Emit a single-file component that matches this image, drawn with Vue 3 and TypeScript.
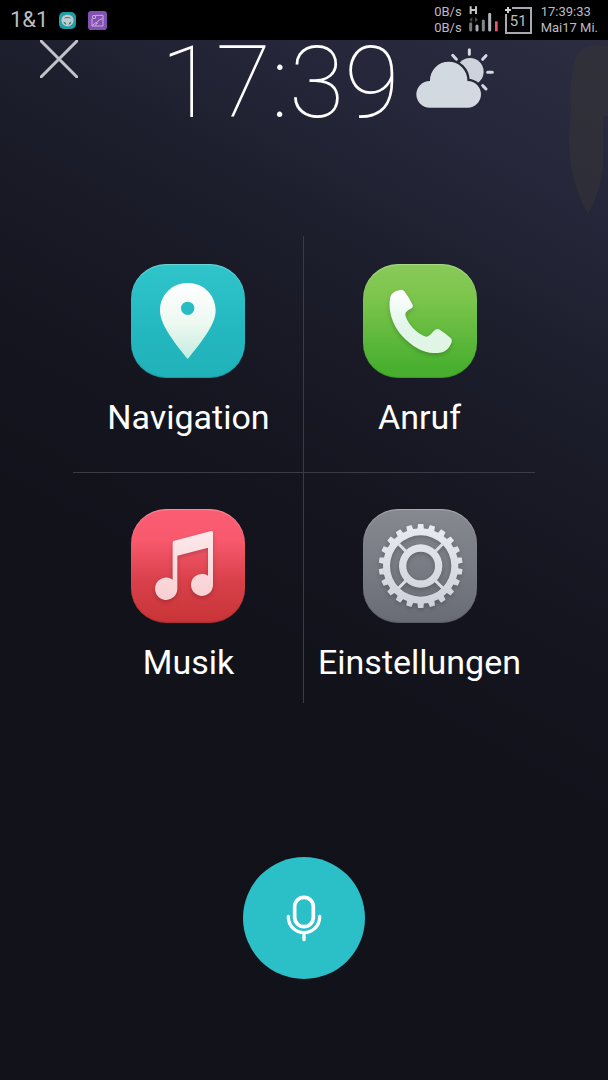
<script setup lang="ts">
interface AppEntry {
  id: 'navigation' | 'call' | 'music' | 'settings'
  label: string
}

const apps: AppEntry[] = [
  { id: 'navigation', label: 'Navigation' },
  { id: 'call', label: 'Anruf' },
  { id: 'music', label: 'Musik' },
  { id: 'settings', label: 'Einstellungen' },
]

const TEETH = 22

function gearOutline(cx: number, cy: number, outer: number, inner: number): string {
  const step = (Math.PI * 2) / TEETH
  const points: string[] = []
  const add = (r: number, a: number) =>
    points.push(`${(cx + r * Math.sin(a)).toFixed(1)} ${(cy - r * Math.cos(a)).toFixed(1)}`)
  for (let i = 0; i < TEETH; i++) {
    const a = i * step
    add(inner, a - step * 0.3)
    add(outer, a - step * 0.22)
    add(outer, a + step * 0.22)
    add(inner, a + step * 0.3)
  }
  return `M${points.join('L')}Z`
}

function disc(cx: number, cy: number, r: number): string {
  return `M${cx - r} ${cy}a${r} ${r} 0 1 0 ${r * 2} 0a${r} ${r} 0 1 0 ${-r * 2} 0Z`
}

const gearRim = gearOutline(173, 171, 126, 113) + disc(173, 171, 92)
const gearHub = disc(173, 171, 65) + disc(173, 171, 43)
</script>

<template>
  <div class="screen">
    <div class="status">
      <div class="status-left">
        <span class="carrier">1&amp;1</span>
        <svg class="note-wheel" viewBox="0 0 48 48" aria-hidden="true">
          <rect width="48" height="48" rx="14" fill="#1f9ea5" />
          <path d="M24 8C34 8 41 14 41 23C41 33 34 40 24 40C14 40 7 33 7 23C7 14 14 8 24 8Z" fill="#c3c9cd" />
          <path d="M13 18Q24 10 35 18Q24 16 13 18ZM12 27L19 30L21 36Q14 34 12 27ZM36 27L29 30L27 36Q34 34 36 27Z" fill="#1f8087" />
        </svg>
        <svg class="note-image" viewBox="0 0 57 57" aria-hidden="true">
          <rect width="57" height="57" rx="10" fill="#8550b4" />
          <g fill="none" stroke="#c9b3dc" stroke-width="3">
            <path d="M22 13H45V45H12V23" />
            <circle cx="18" cy="18" r="5" />
            <path d="M13 44L24 34L29 38M23 44Q26 27 44 23" />
          </g>
        </svg>
      </div>
      <div class="status-right">
        <div class="pair rates"><span>0B/s</span><span>0B/s</span></div>
        <svg class="signal" viewBox="0 0 90 84" aria-hidden="true">
          <path d="M5 1V24M21 1V24M5 12H21" stroke="#c6c6ca" stroke-width="6" fill="none" />
          <path d="M10 33L1 41L10 49ZM18 33L27 41L18 49Z" fill="#47474c" />
          <g stroke-width="9" stroke-linecap="round">
            <path d="M5 53V72" stroke="#77777e" />
            <path d="M24 60V72" stroke="#a9a9b1" />
            <path d="M43 45V72" stroke="#85858e" />
            <path d="M62 25V72" stroke="#b4b4bc" />
          </g>
          <path d="M82 46V76" stroke="#ed5961" stroke-width="8" />
        </svg>
        <div class="battery">
          <span>51</span>
          <svg class="battery-plus" viewBox="0 0 8 8" aria-hidden="true">
            <path d="M4 1V7M1 4H7" stroke="#d0d0d4" stroke-width="2" />
          </svg>
        </div>
        <div class="pair date"><span>17:39:33</span><span>Mai17 Mi.</span></div>
      </div>
    </div>

    <svg class="smudge" viewBox="0 0 40 170" preserveAspectRatio="none" aria-hidden="true">
      <path d="M40 0H23Q9 2 5 22Q1 43 3 65Q-1 97 3 120Q7 145 20 168Q31 150 35 121V70H40Z" fill="#343437" />
    </svg>

    <header class="top">
      <button class="close" type="button" aria-label="Schließen">
        <svg viewBox="0 0 38 38" aria-hidden="true">
          <path d="M1 1L37 37M37 1L1 37" stroke="#c3c3cb" stroke-width="3" stroke-linecap="round" />
        </svg>
      </button>
      <time class="clock">17:39</time>
      <svg class="weather" viewBox="48 54 234 180" aria-hidden="true">
        <g stroke="#d3d9e1" stroke-width="9" stroke-linecap="round">
          <path d="M208 59V73M258 77L248 88M263 127H277M248 167L258 177M158 76L169 88" />
        </g>
        <circle cx="210" cy="125" r="41" fill="#cdd3dc" />
        <g fill="#262739">
          <circle cx="146" cy="151" r="63" />
          <circle cx="203" cy="193" r="47" />
        </g>
        <g fill="#d3d9e1">
          <circle cx="146" cy="151" r="56" />
          <rect x="49" y="153" width="194" height="80" rx="40" />
        </g>
      </svg>
    </header>

    <main class="grid">
      <button v-for="app in apps" :key="app.id" class="entry" type="button">
        <span class="tile" :class="app.id">
          <svg v-if="app.id === 'navigation'" viewBox="0 0 342 342" aria-hidden="true">
            <defs>
              <linearGradient id="pinFill" x1="0" y1="0" x2="0" y2="1">
                <stop offset="0" stop-color="#fff" />
                <stop offset="0.55" stop-color="#ecf8f0" />
                <stop offset="1" stop-color="#c3ecdf" />
              </linearGradient>
            </defs>
            <path fill="url(#pinFill)" fill-rule="evenodd" d="M170 57C123 57 87 93 87 140C87 184 137 243 170 285C203 243 254 184 254 140C254 93 218 57 170 57ZM170 113a20 20 0 1 1 0 40a20 20 0 1 1 0-40Z" />
          </svg>
          <svg v-else-if="app.id === 'call'" viewBox="0 0 342 342" aria-hidden="true">
            <defs>
              <linearGradient id="phoneFill" x1="0" y1="0" x2="0" y2="1">
                <stop offset="0" stop-color="#fff" />
                <stop offset="0.6" stop-color="#e1f5ea" />
                <stop offset="1" stop-color="#e0f6e3" />
              </linearGradient>
            </defs>
            <path fill="url(#phoneFill)" d="M111 78Q119 76 124 82Q139 101 149 123Q151 129 146 133Q127 142 127 151C129 174 163 213 191 218Q199 217 213 200Q220 192 228 196Q247 208 263 222Q269 228 265 237Q259 253 246 261Q235 268 211 267C181 267 148 249 118 217C91 187 77 148 80 112Q80 83 111 78Z" />
          </svg>
          <svg v-else-if="app.id === 'music'" viewBox="0 0 342 342" aria-hidden="true">
            <defs>
              <linearGradient id="noteFill" x1="0" y1="0" x2="0" y2="1">
                <stop offset="0" stop-color="#fce9eb" />
                <stop offset="1" stop-color="#f8cfd2" />
              </linearGradient>
            </defs>
            <path fill="url(#noteFill)" d="M125 101Q125 96 130 95L240 66Q246 65 246 71V227A33 33 0 1 1 231 200V116L139 140V239A33.500 33.500 0 1 1 125 212Z" />
          </svg>
          <svg v-else viewBox="0 0 342 342" aria-hidden="true">
            <defs>
              <linearGradient id="gearFill" x1="0" y1="46" x2="0" y2="298" gradientUnits="userSpaceOnUse">
                <stop offset="0" stop-color="#e9ebf2" />
                <stop offset="1" stop-color="#cfd1da" />
              </linearGradient>
            </defs>
            <g fill="url(#gearFill)" fill-rule="evenodd">
              <path :d="gearRim" />
              <path :d="gearHub" />
            </g>
            <path d="M107 105L129 127M239 105L217 127M107 237L129 215M239 237L217 215" stroke="#dcdee6" stroke-width="9" />
          </svg>
        </span>
        <span class="label">{{ app.label }}</span>
      </button>
    </main>

    <footer class="voice">
      <button class="mic" type="button" aria-label="Spracheingabe">
        <svg viewBox="0 0 108 141" aria-hidden="true">
          <g fill="none" stroke="#fff" stroke-linecap="round">
            <rect x="26" y="7" width="56" height="88" rx="28" stroke-width="11" />
            <path d="M7 64V66A47 47 0 0 0 101 66V64M54 114V134" stroke-width="10" />
          </g>
        </svg>
      </button>
    </footer>
  </div>
</template>

<style>
body {
  margin: 0;
  background: #12121b;
}
</style>

<style scoped>
.screen {
  position: relative;
  display: flex;
  flex-direction: column;
  box-sizing: border-box;
  min-height: 100vh;
  overflow: hidden;
  color: #fff;
  font-family: Roboto, "Liberation Sans", sans-serif;
  background: linear-gradient(209deg, #2d2e42 0%, #252639 16%, #1d1e2c 28%, #171823 39%, #14141e 49%, #12121b 60%);
}

button {
  padding: 0;
  border: 0;
  background: none;
  color: inherit;
  font: inherit;
  cursor: pointer;
}

svg {
  display: block;
}

.status {
  display: flex;
  justify-content: space-between;
  height: 40px;
  padding: 0 10px;
  background: #000;
  color: #bcbcc0;
}

.status-left,
.status-right {
  display: flex;
  align-items: center;
}

.carrier {
  width: 49px;
  font-size: 22px;
  line-height: 40px;
}

.note-wheel {
  width: 17px;
  height: 17px;
}

.note-image {
  width: 19px;
  height: 19px;
  margin-left: 12px;
}

.pair {
  display: flex;
  flex-direction: column;
  font-size: 13px;
  line-height: 16px;
}

.signal {
  width: 30px;
  height: 28px;
  margin: 0 6px 0 7px;
}

.battery {
  position: relative;
  box-sizing: border-box;
  width: 27px;
  height: 27px;
  margin-right: 9px;
  border: 2px solid #a9a9b0;
  font-size: 15px;
  line-height: 24px;
  text-align: center;
}

.battery-plus {
  position: absolute;
  top: -3px;
  left: -3px;
  width: 8px;
  height: 8px;
  background: #000;
}

.smudge {
  position: absolute;
  top: 46px;
  right: 0;
  width: 40px;
  height: 170px;
  opacity: 0.6;
}

.top {
  display: grid;
  grid-template-columns: 5fr auto 7fr;
  height: 196px;
  padding: 0 40px;
}

.close {
  width: 38px;
  height: 38px;
}

.clock {
  height: 86px;
  font-size: 101px;
  font-weight: 100;
  line-height: 86px;
}

.weather {
  width: 78px;
  height: 60px;
  margin: 8px 0 0 17px;
}

.grid {
  position: relative;
  display: grid;
  grid-template-columns: 1fr 1fr;
  grid-template-rows: 236px 231px;
  width: 76%;
  margin: 0 auto;
}

.grid::before,
.grid::after {
  content: "";
  position: absolute;
  background: #3b3b44;
}

.grid::before {
  top: 0;
  bottom: 0;
  left: calc(50% - 1px);
  width: 1px;
}

.grid::after {
  top: 236px;
  left: 0;
  right: 0;
  height: 1px;
}

.entry {
  display: flex;
  flex-direction: column;
  align-items: center;
  justify-content: flex-start;
  padding-top: 28px;
}

.entry:nth-child(n + 3) {
  padding-top: 37px;
}

.tile {
  width: 114px;
  height: 114px;
  border-radius: 35px;
  box-shadow: inset 0 1px 1px rgba(255, 255, 255, 0.3), inset 0 -1px 1px rgba(0, 0, 0, 0.15);
}

.tile svg {
  width: 114px;
  height: 114px;
  filter: drop-shadow(0 2px 2px rgba(0, 0, 0, 0.2));
}

.navigation {
  background: linear-gradient(#30c5cb, #23b7bf 60%, #20b2b9);
}

.navigation svg {
  filter: none;
}

.call {
  background: linear-gradient(#89ca59, #7cc54c 30%, #49b02f 90%);
}

.music {
  background: linear-gradient(#fb5d73, #f8596d 28%, #d9414b 62%, #c73436);
}

.settings {
  background: linear-gradient(#878991, #7b7d86 45%, #696b75);
}

.label {
  margin-top: 19px;
  font-size: 34px;
  line-height: 40px;
  white-space: nowrap;
}

.voice {
  display: flex;
  justify-content: center;
  padding: 154px 0 100px;
}

.mic {
  display: flex;
  align-items: center;
  justify-content: center;
  width: 122px;
  height: 122px;
  border-radius: 50%;
  background: #2bc0c8;
}

.mic svg {
  width: 36px;
  height: 47px;
}
</style>
